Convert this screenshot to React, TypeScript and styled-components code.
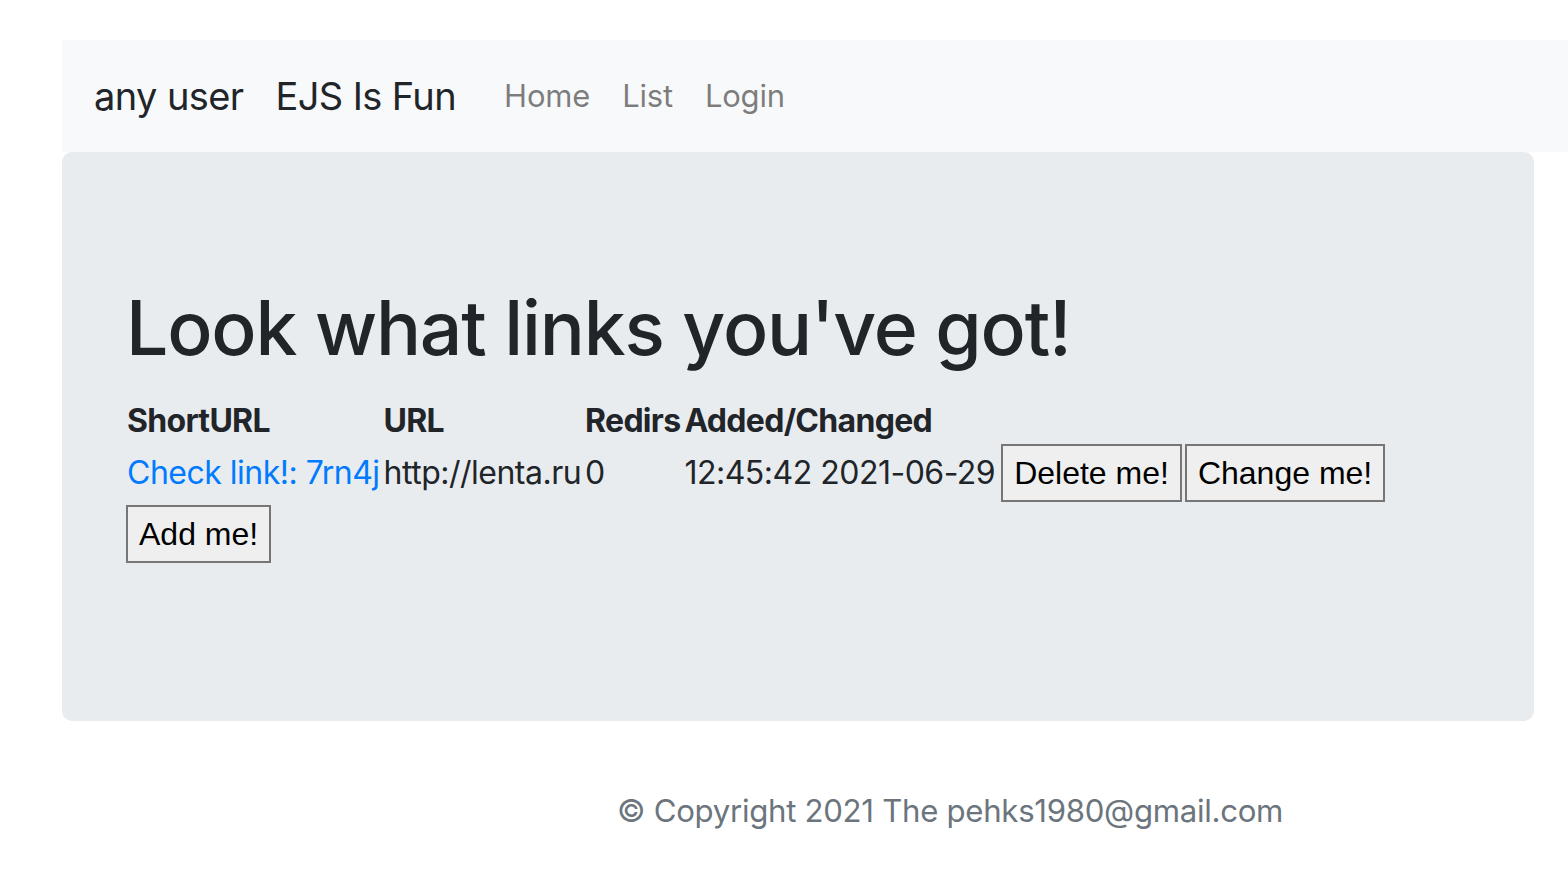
import React from "react";
import styled, { createGlobalStyle } from "styled-components";

const Global = createGlobalStyle`
  html, body { margin: 0; padding: 0; background: #fff; overflow: hidden; }
  body { font-family: Inter, "Noto Sans", sans-serif; color: #212529; }
`;

const Page = styled.div`
  padding: 40px 0 0 62px;
  width: 1506px;
`;

const Navbar = styled.nav`
  display: flex;
  align-items: center;
  background: #f8f9fa;
  padding: 16px 32px;
  margin-right: -40px;
`;

const Brand = styled.a`
  font-size: 38px;
  line-height: 60px;
  padding: 10px 0;
  margin-right: 32px;
  color: #212529;
  text-decoration: none;
  letter-spacing: -0.6px;
  white-space: nowrap;
`;

const NavLinks = styled.div`
  display: flex;
`;

const NavLink = styled.a`
  font-size: 31px;
  line-height: 48px;
  padding: 16px;
  color: rgba(0, 0, 0, 0.5);
  text-decoration: none;
  letter-spacing: -0.2px;
`;

const Jumbotron = styled.main`
  width: 1472px;
  box-sizing: border-box;
  background: #e9ecef;
  border-radius: 10px;
  padding: 128px 64px;
  height: 569px;
`;

const Title = styled.h1`
  margin: 0 0 20px;
  font-size: 75px;
  line-height: 96px;
  font-weight: 500;
  letter-spacing: -1.2px;
`;

const Table = styled.table`
  border-spacing: 4px 0;
  margin: 0 0 0 -3px;
  font-size: 32px;
  letter-spacing: -0.5px;
`;

const Th = styled.th`
  text-align: left;
  font-weight: 700;
  padding: 3px 0 0;
  line-height: 43px;
  white-space: nowrap;
  letter-spacing: -0.7px;
`;

const Td = styled.td`
  padding: 2px 0;
  line-height: 48px;
  white-space: nowrap;
  vertical-align: middle;
`;

const ButtonCell = styled.td`
  padding: 2px 0 2px 2px;
  white-space: nowrap;
  display: flex;
  gap: 3px;
`;

const Link = styled.a`
  color: #007bff;
  text-decoration: none;
`;

const Button = styled.button`
  font-family: "Liberation Sans", Arial, sans-serif;
  font-size: 32px;
  line-height: 48px;
  padding: 3px 11px;
  background: #efefef;
  border: 2px solid #767676;
  color: #000;
  margin: 0;
  letter-spacing: 0;
`;

const Actions = styled.div`
  margin-top: 1px;
`;

const Footer = styled.footer`
  padding: 66px 0 0 555px;
  font-size: 31.2px;
  line-height: 48px;
  color: #6c757d;
  letter-spacing: -0.3px;
  white-space: nowrap;
`;

export default function App() {
  return (
    <>
      <Global />
      <Page>
        <Navbar>
          <Brand href="#">any user</Brand>
          <Brand href="#">EJS Is Fun</Brand>
          <NavLinks>
            <NavLink href="#">Home</NavLink>
            <NavLink href="#">List</NavLink>
            <NavLink href="#">Login</NavLink>
          </NavLinks>
        </Navbar>
        <Jumbotron>
          <Title>Look what links you've got!</Title>
          <Table>
            <thead>
              <tr>
                <Th>ShortURL</Th>
                <Th>URL</Th>
                <Th>Redirs</Th>
                <Th>Added/Changed</Th>
              </tr>
            </thead>
            <tbody>
              <tr>
                <Td>
                  <Link href="#">Check link!: 7rn4j</Link>
                </Td>
                <Td>http://lenta.ru</Td>
                <Td>0</Td>
                <Td>12:45:42 2021-06-29</Td>
                <ButtonCell>
                  <Button>Delete me!</Button>
                  <Button>Change me!</Button>
                </ButtonCell>
              </tr>
            </tbody>
          </Table>
          <Actions>
            <Button>Add me!</Button>
          </Actions>
        </Jumbotron>
        <Footer>© Copyright 2021 The pehks1980@gmail.com</Footer>
      </Page>
    </>
  );
}
